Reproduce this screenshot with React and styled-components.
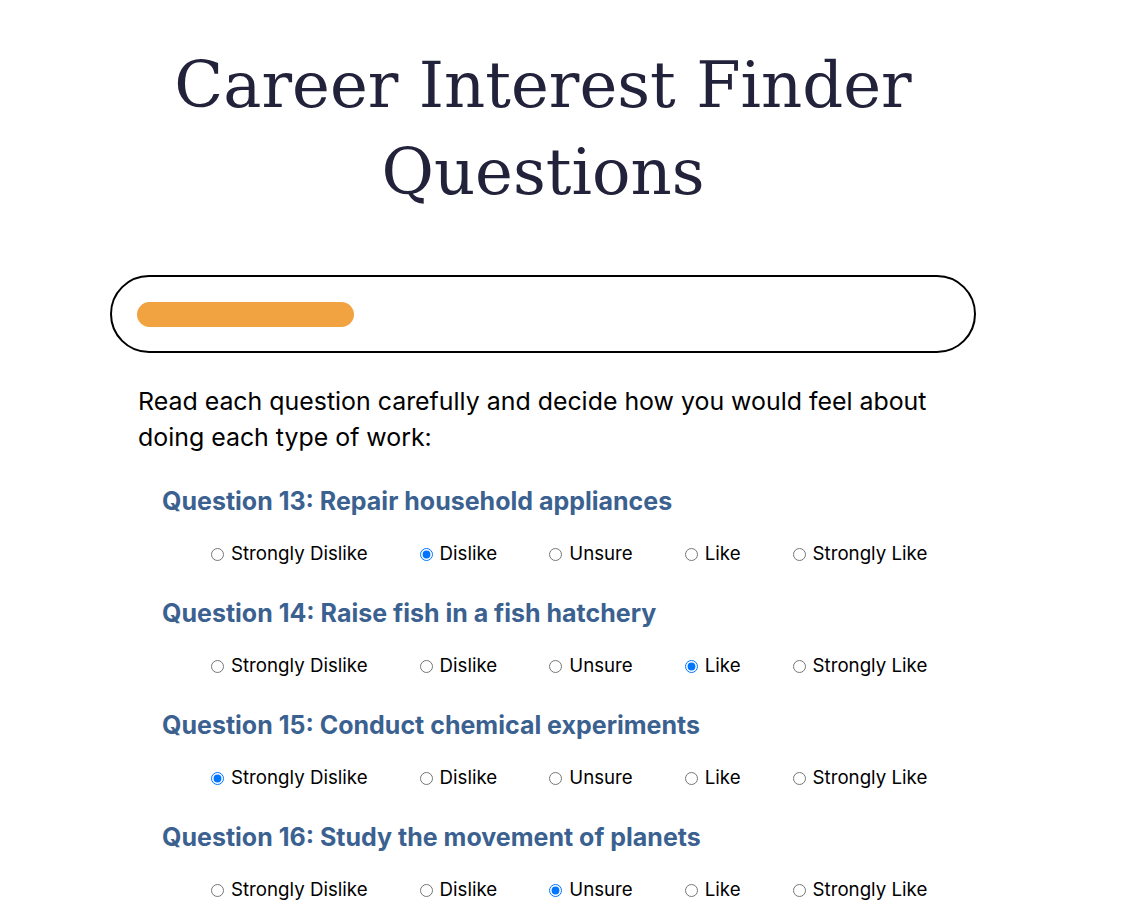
import React, { useState } from 'react';
import styled, { createGlobalStyle } from 'styled-components';

const GlobalStyle = createGlobalStyle`
  body {
    margin: 0;
    background: #ffffff;
    font-family: Inter, "Noto Sans", sans-serif;
  }
`;

const Page = styled.div`
  width: 866px;
  margin-left: 110px;
  padding-top: 42px;
`;

const Title = styled.h1`
  margin: 0;
  font-family: "DejaVu Serif", Georgia, serif;
  font-weight: 400;
  font-size: 64px;
  line-height: 87px;
  color: #22223b;
  text-align: center;
`;

const Progress = styled.div`
  margin-top: 59px;
  height: 78px;
  border: 2px solid #000;
  border-radius: 40px;
  padding: 24px 25px;
  box-sizing: border-box;
  display: flex;
  align-items: center;
`;

const Fill = styled.div`
  height: 25px;
  border-radius: 13px;
  background: #f2a341;
`;

const Intro = styled.p`
  margin: 30px 0 28px 28px;
  width: 820px;
  font-size: 24.9px;
  line-height: 36px;
  color: #000;
`;

const Question = styled.section`
  margin: 0 0 0 52px;
`;

const QuestionTitle = styled.h2`
  margin: 0;
  font-size: 25px;
  line-height: 36px;
  font-weight: 700;
  color: #3b6190;
`;

const Options = styled.div`
  display: flex;
  gap: 47px;
  padding: 23px 0 29px 44px;
`;

const Option = styled.label`
  display: flex;
  align-items: center;
  font-size: 18.7px;
  line-height: 24px;
  color: #000;
  cursor: pointer;

  input {
    margin: 0 7px 0 5px;
    width: 13px;
    height: 13px;
  }
`;

const choices = ['Strongly Dislike', 'Dislike', 'Unsure', 'Like', 'Strongly Like'];

const questions = [
  { id: 13, text: 'Repair household appliances', answer: 'Dislike' },
  { id: 14, text: 'Raise fish in a fish hatchery', answer: 'Like' },
  { id: 15, text: 'Conduct chemical experiments', answer: 'Strongly Dislike' },
  { id: 16, text: 'Study the movement of planets', answer: 'Unsure' },
];

export default function App() {
  const [answers, setAnswers] = useState(
    Object.fromEntries(questions.map((q) => [q.id, q.answer]))
  );

  return (
    <>
      <GlobalStyle />
      <Page>
        <Title>Career Interest Finder Questions</Title>
        <Progress>
          <Fill style={{ width: '26.7%' }} />
        </Progress>
        <Intro>
          Read each question carefully and decide how you would feel about doing each type of work:
        </Intro>
        {questions.map((q) => (
          <Question key={q.id}>
            <QuestionTitle>Question {q.id}: {q.text}</QuestionTitle>
            <Options>
              {choices.map((c) => (
                <Option key={c}>
                  <input
                    type="radio"
                    name={`q${q.id}`}
                    checked={answers[q.id] === c}
                    onChange={() => setAnswers({ ...answers, [q.id]: c })}
                  />
                  {c}
                </Option>
              ))}
            </Options>
          </Question>
        ))}
      </Page>
    </>
  );
}
